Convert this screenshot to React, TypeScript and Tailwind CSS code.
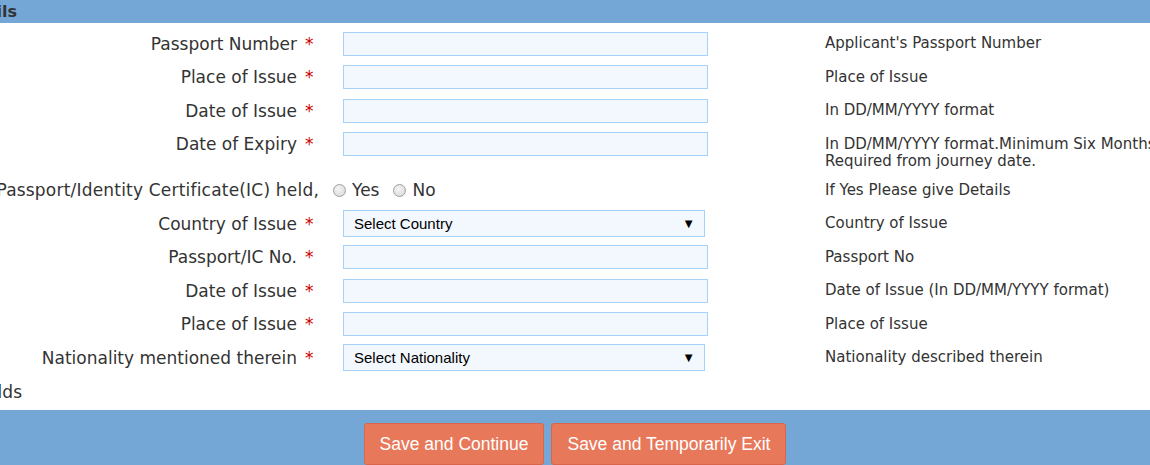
import { ReactNode } from 'react'

const FONT = "font-['DejaVu_Sans',Verdana,sans-serif]"

type Field = {
    label: string
    kind: 'input' | 'select'
    placeholder?: string
    hint: ReactNode
    tall?: boolean
}

const TOP_FIELDS: Field[] = [
    { label: 'Passport Number', kind: 'input', hint: "Applicant's Passport Number" },
    { label: 'Place of Issue', kind: 'input', hint: 'Place of Issue' },
    { label: 'Date of Issue', kind: 'input', hint: 'In DD/MM/YYYY format' },
    {
        label: 'Date of Expiry',
        kind: 'input',
        tall: true,
        hint: (
            <>
                In DD/MM/YYYY format.Minimum Six Months
                <br />
                Required from journey date.
            </>
        ),
    },
]

const IC_FIELDS: Field[] = [
    { label: 'Country of Issue', kind: 'select', placeholder: 'Select Country', hint: 'Country of Issue' },
    { label: 'Passport/IC No.', kind: 'input', hint: 'Passport No' },
    { label: 'Date of Issue', kind: 'input', hint: 'Date of Issue (In DD/MM/YYYY format)' },
    { label: 'Place of Issue', kind: 'input', hint: 'Place of Issue' },
    { label: 'Nationality mentioned therein', kind: 'select', placeholder: 'Select Nationality', hint: 'Nationality described therein' },
]

function Control({ field }: { field: Field }) {
    if (field.kind === 'select') {
        return (
            <div className="w-[362px] h-[27px] flex items-center justify-between pl-[10px] pr-[9px] border border-[#a6d1f8] bg-[#f3f8fe] font-['Liberation_Sans',Arial,sans-serif] text-[15px] text-black">
                <span>{field.placeholder}</span>
                <span className="text-[13px]">▼</span>
            </div>
        )
    }
    return <div className="w-[365px] h-[24px] border border-[#a6d1f8] bg-[#f3f8fe]" />
}

function FieldRow({ field }: { field: Field }) {
    return (
        <div className={field.tall ? 'flex items-start h-[46px] pt-[4.75px]' : 'flex items-center h-[33.5px]'}>
            <div className="w-[297px] shrink-0 flex justify-end whitespace-nowrap text-[17px] leading-[24px] text-[#333]">
                {field.label}
            </div>
            <div className="w-[46px] shrink-0 pl-[8px] text-[17px] leading-[24px] text-[#c00]">*</div>
            <div className="w-[482px] shrink-0">
                <Control field={field} />
            </div>
            <div className={field.tall ? 'shrink-0 mt-[3.5px] text-[15px] leading-[17px] text-[#333] whitespace-nowrap' : 'shrink-0 text-[15px] leading-[17px] text-[#333] whitespace-nowrap'}>
                {field.hint}
            </div>
        </div>
    )
}

function Radio({ label }: { label: string }) {
    return (
        <span className="flex items-center gap-[6px]">
            <span className="w-[13px] h-[13px] rounded-full border border-[#a0a0a0] bg-[radial-gradient(circle_at_40%_35%,#f4f4f4,#d6d6d6)]" />
            <span>{label}</span>
        </span>
    )
}

export default function App() {
    return (
        <div className={`w-[1150px] h-[465px] overflow-hidden bg-white ${FONT}`}>
            {/* section header, scrolled off to the left */}
            <div className="h-[23px] bg-[#75a7d6] flex items-center">
                <div className="w-[17px] flex justify-end whitespace-nowrap text-[16px] font-bold text-[#333]">
                    Details
                </div>
            </div>

            <div className="pt-[4px]">
                {TOP_FIELDS.map((f, i) => (
                    <FieldRow key={i} field={f} />
                ))}

                {/* other passport held */}
                <div className="flex items-center h-[33.5px] text-[17px] text-[#333]">
                    <div className="w-[319px] shrink-0 flex justify-end whitespace-nowrap leading-[24px] tracking-[0.2px]">
                        Passport/Identity Certificate(IC) held,
                    </div>
                    <div className="w-[506px] shrink-0 flex items-center gap-[14px] pl-[14px]">
                        <Radio label="Yes" />
                        <Radio label="No" />
                    </div>
                    <div className="shrink-0 text-[15px] leading-[17px] whitespace-nowrap">If Yes Please give Details</div>
                </div>

                {IC_FIELDS.map((f, i) => (
                    <FieldRow key={i} field={f} />
                ))}
            </div>

            <div className="h-[35.5px] flex items-center">
                <div className="w-[22px] flex justify-end whitespace-nowrap text-[17px] text-[#333]">
                    Fields
                </div>
            </div>

            {/* actions */}
            <div className="h-[55px] bg-[#75a7d6] flex justify-center gap-[7px] pt-[13px]">
                <button className="h-[42px] px-[15px] bg-[#e8785a] border border-[#d9664a] rounded-[3px] text-white text-[17.5px] font-['Liberation_Sans',Arial,sans-serif]">
                    Save and Continue
                </button>
                <button className="h-[42px] px-[15px] bg-[#e8785a] border border-[#d9664a] rounded-[3px] text-white text-[17.5px] font-['Liberation_Sans',Arial,sans-serif]">
                    Save and Temporarily Exit
                </button>
            </div>
        </div>
    )
}
